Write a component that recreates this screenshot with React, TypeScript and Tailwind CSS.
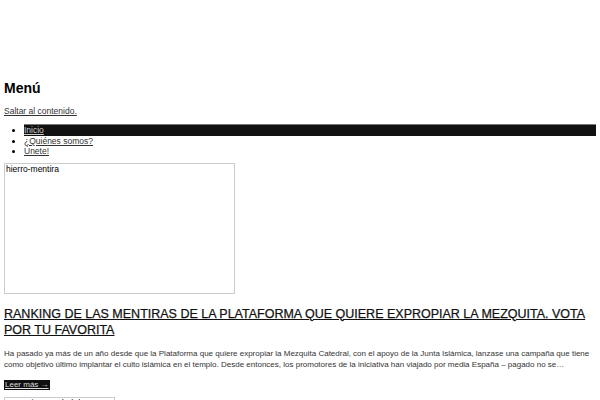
const App = () => {
  return (
    <div className="w-[600px] h-[400px] overflow-hidden bg-white text-black font-['Liberation_Sans',Arial,sans-serif]">
      <header className="pt-[78px] px-1">
        <h2 className="text-[14px] font-bold leading-[20px]">Menú</h2>
        <a href="#" className="block mt-[7px] text-[8.5px] leading-[12px] text-[#333] underline">
          Saltar al contenido.
        </a>
        <ul className="mt-[7px] pl-[20px] list-disc text-[8.5px] leading-[10.5px]">
          <li>
            <a href="#" className="block bg-[#111] border-t border-[#777] text-[#ccc] underline">
              Inicio
            </a>
          </li>
          <li>
            <a href="#" className="text-[#333] underline">
              ¿Quiénes somos?
            </a>
          </li>
          <li>
            <a href="#" className="text-[#333] underline">
              Únete!
            </a>
          </li>
        </ul>
      </header>
      <main className="px-1 mt-[6px]">
        <div className="w-[231px] h-[131px] border border-[#ccc] text-[8.5px] leading-[11px] pl-[1px]">
          hierro-mentira
        </div>
        <h1 className="mt-[12px] text-[12.5px] leading-[16px] text-[#111] underline [-webkit-text-stroke:0.25px_#111]">
          RANKING DE LAS MENTIRAS DE LA PLATAFORMA QUE QUIERE EXPROPIAR LA MEZQUITA. VOTA POR TU FAVORITA
        </h1>
        <p className="mt-[10px] text-[8px] leading-[11px] text-[#333]">
          Ha pasado ya más de un año desde que la Plataforma que quiere expropiar la Mezquita Catedral, con el apoyo de la Junta Islámica, lanzase una campaña que tiene como objetivo último implantar el culto islámica en el templo. Desde entonces, los promotores de la iniciativa han viajado por media España – pagado no se…
        </p>
        <a href="#" className="inline-block mt-[7px] bg-[#111] text-[#ddd] text-[8px] leading-[10px] px-[1px] underline">
          Leer más →
        </a>
        <div className="mt-[3px] w-[111px] h-[20px] border border-[#ccc] text-[8.5px] leading-[11px] pl-[1px]">
          mezquita catedral de Córdoba
        </div>
      </main>
    </div>
  );
};

export default App;
